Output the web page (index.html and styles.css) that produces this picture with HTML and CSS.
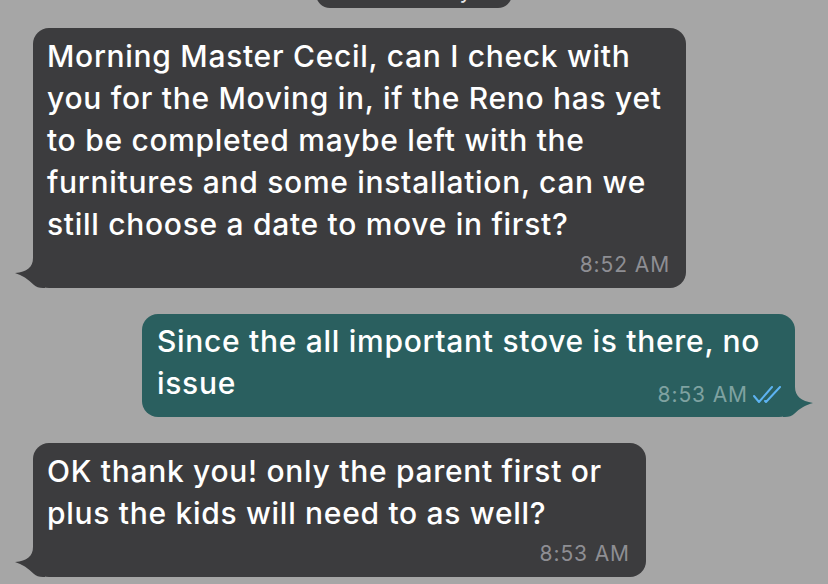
FILE: index.html
```html
<!DOCTYPE html>
<html lang="en">
<head>
<meta charset="utf-8">
<title>Chat</title>
<link rel="stylesheet" href="styles.css">
</head>
<body>
<div class="chat">
  <div class="pill">Today</div>

  <div class="bubble in b1">
    <div class="text">Morning Master Cecil, can I check with<br>you for the Moving in, if the Reno has yet<br>to be completed maybe left with the<br>furnitures and some installation, can we<br>still choose a date to move in first?</div>
    <div class="meta">8:52 AM</div>
    <svg class="tail tail-left" width="30" height="34" viewBox="0 0 30 34"><path d="M18,0 L18,4 C18,13 12,18 0,19 C7,21 13,25 19,31 C21,33 24,34 28,34 L30,34 L30,0 Z"/></svg>
  </div>

  <div class="bubble out b2">
    <div class="text">Since the all important stove is there, no<br>issue</div>
    <div class="meta overlap">8:53 AM<svg class="ticks" width="30" height="18" viewBox="0 0 30 18"><path d="M1,10 L6,16 L19,1 M12,15 L13,16 L27,1"/></svg></div>
    <svg class="tail tail-right" width="30" height="34" viewBox="0 0 30 34"><path d="M12,0 L12,4 C12,13 18,18 30,20 C23,22 17,25 11,31 C9,33 6,34 2,34 L0,34 L0,0 Z"/></svg>
  </div>

  <div class="bubble in b3">
    <div class="text">OK thank you! only the parent first or<br>plus the kids will need to as well?</div>
    <div class="meta">8:53 AM</div>
    <svg class="tail tail-left" width="30" height="34" viewBox="0 0 30 34"><path d="M18,0 L18,4 C18,13 12,18 0,19 C7,21 13,25 19,31 C21,33 24,34 28,34 L30,34 L30,0 Z"/></svg>
  </div>
</div>
</body>
</html>
```

FILE: styles.css
```css
html, body {
  margin: 0;
  padding: 0;
  background: #a6a6a6;
  height: 100%;
  overflow: hidden;
}

.chat {
  display: flex;
  flex-direction: column;
  font-family: Inter, "Noto Sans", "Liberation Sans", sans-serif;
}

.pill {
  align-self: center;
  width: 196px;
  height: 36px;
  margin-top: -28px;
  box-sizing: border-box;
  background: #3c3c3e;
  border-radius: 14px;
  color: #e9e9ea;
  font-size: 22px;
  line-height: 30px;
  text-align: center;
  padding: 3px 0 0 52px;
  overflow: hidden;
}

.bubble {
  position: relative;
  box-sizing: border-box;
  border-radius: 16px;
  color: #ffffff;
  padding: 7px 16px 11px 14px;
}

.in {
  align-self: flex-start;
  margin-left: 33px;
  background: #3c3c3e;
}

.out {
  align-self: flex-end;
  margin-right: 33px;
  background: #2a5f5f;
  padding: 6px 12px 10px 15px;
}

.b1 { width: 653px; margin-top: 20px; }
.b2 { width: 653px; margin-top: 26px; }
.b3 { width: 613px; margin-top: 26px; }

.text {
  font-size: 30px;
  font-weight: 500;
  line-height: 42px;
  white-space: nowrap;
  letter-spacing: 0.7px;
}

.meta {
  margin-top: 8px;
  font-size: 21px;
  line-height: 24px;
  letter-spacing: 0.9px;
  text-align: right;
  color: #8e8e93;
  display: flex;
  justify-content: flex-end;
  align-items: center;
}

.out .meta {
  color: #7fa2a1;
}

.meta.overlap {
  margin-top: -21px;
}

.ticks {
  margin-left: 5px;
  fill: none;
  stroke: #5db3f2;
  stroke-width: 2;
  stroke-linecap: round;
  stroke-linejoin: round;
}

.tail {
  position: absolute;
  bottom: 0;
}

.tail-left {
  left: -18px;
  fill: #3c3c3e;
}

.tail-right {
  right: -18px;
  fill: #2a5f5f;
}
```
